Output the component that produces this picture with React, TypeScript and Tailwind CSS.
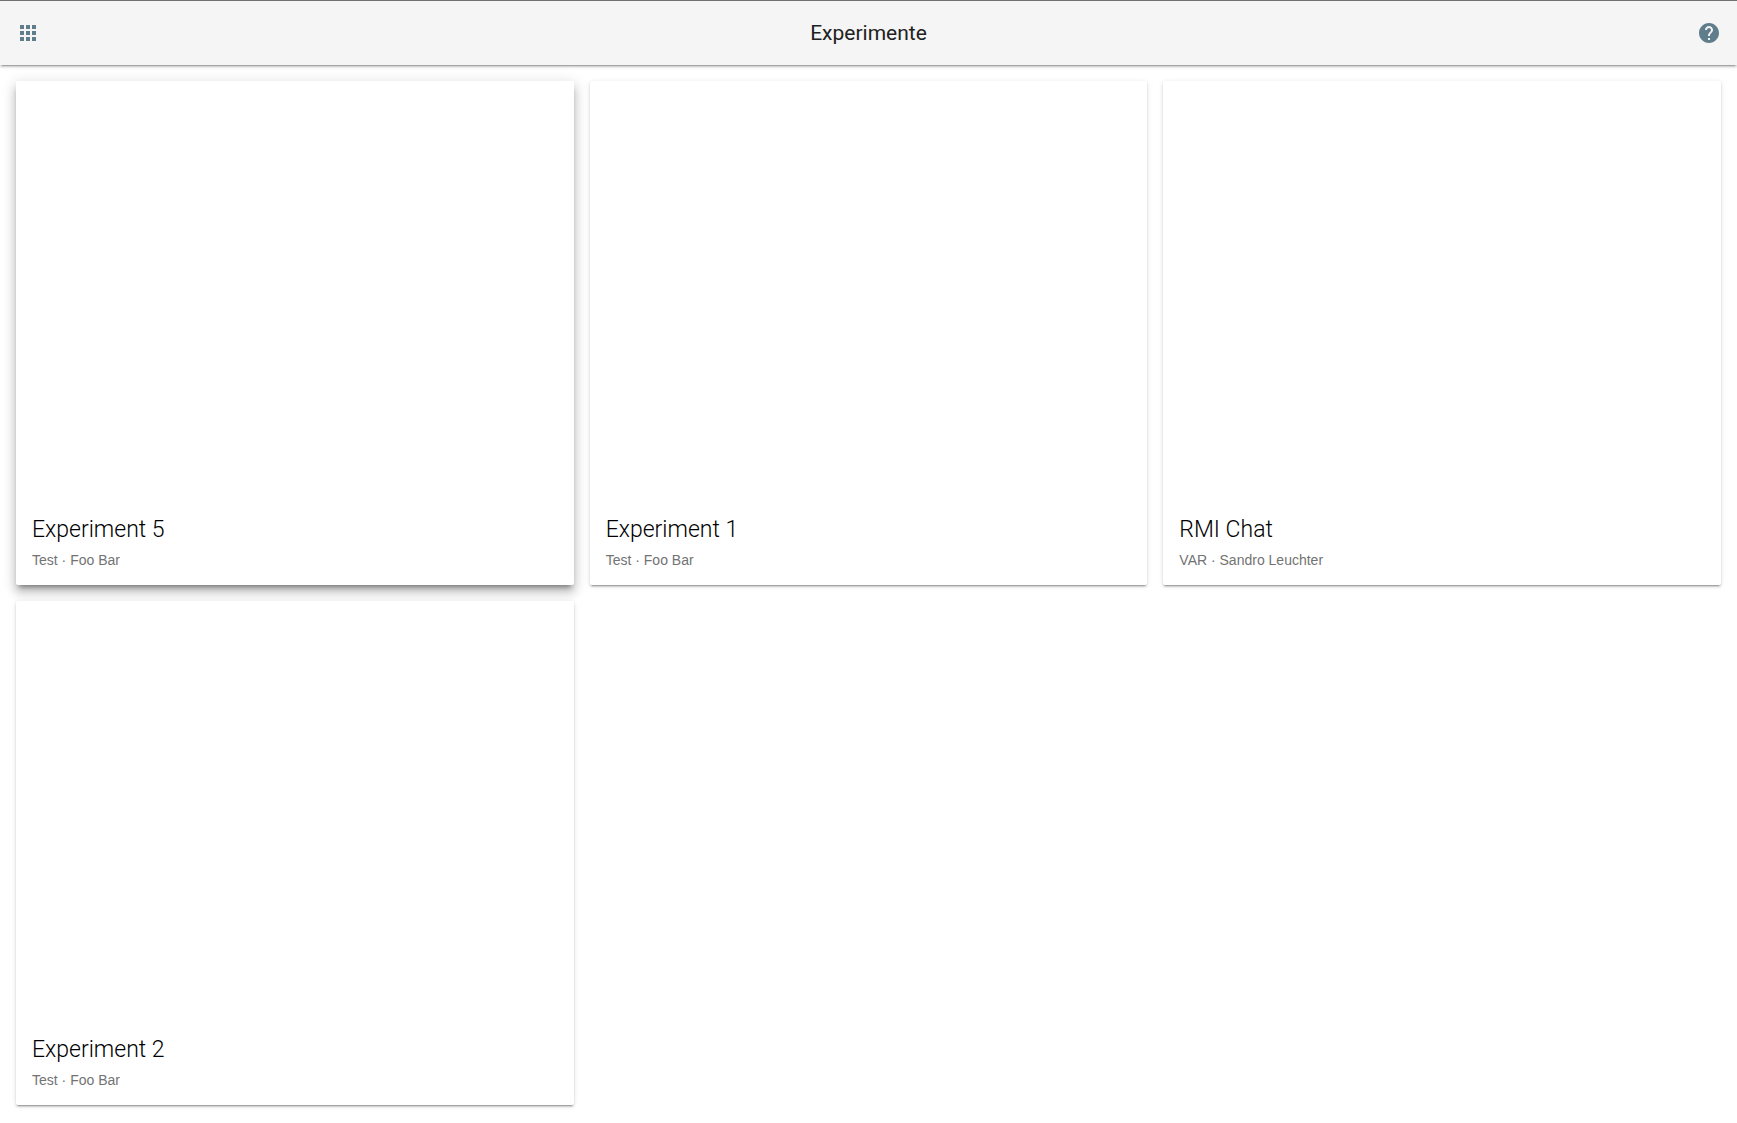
import React from "react";

type Experiment = { id: string; title: string; course: string; author: string; raised?: boolean };

const experiments: Experiment[] = [
  { id: "experiment-5", title: "Experiment 5", course: "Test", author: "Foo Bar", raised: true },
  { id: "experiment-1", title: "Experiment 1", course: "Test", author: "Foo Bar" },
  { id: "rmi-chat", title: "RMI Chat", course: "VAR", author: "Sandro Leuchter" },
  { id: "experiment-2", title: "Experiment 2", course: "Test", author: "Foo Bar" },
];

function AppsIcon() {
  return (
    <svg viewBox="0 0 24 24" className="size-6 fill-current" aria-hidden="true">
      <path d="M4 8h4V4H4v4zm6 12h4v-4h-4v4zm-6 0h4v-4H4v4zm0-6h4v-4H4v4zm6 0h4v-4h-4v4zm6-10v4h4V4h-4zm-6 4h4V4h-4v4zm6 6h4v-4h-4v4zm0 6h4v-4h-4v4z" />
    </svg>
  );
}

function HelpIcon() {
  return (
    <svg viewBox="0 0 24 24" className="size-6 fill-current" aria-hidden="true">
      <path d="M12 2C6.48 2 2 6.48 2 12s4.48 10 10 10 10-4.48 10-10S17.52 2 12 2zm1 17h-2v-2h2v2zm2.07-7.75l-.9.92C13.45 12.9 13 13.5 13 15h-2v-.5c0-1.1.45-2.1 1.17-2.83l1.24-1.26c.37-.36.59-.86.59-1.41 0-1.1-.9-2-2-2s-2 .9-2 2H8c0-2.21 1.79-4 4-4s4 1.79 4 4c0 .88-.36 1.68-.93 2.25z" />
    </svg>
  );
}

function ExperimentCard({ experiment }: { experiment: Experiment }) {
  const shadow = experiment.raised
    ? "shadow-[0_8px_10px_1px_rgba(0,0,0,0.14),0_3px_14px_2px_rgba(0,0,0,0.12),0_5px_5px_-3px_rgba(0,0,0,0.4)]"
    : "shadow-[0_2px_2px_rgba(0,0,0,0.14),0_1px_5px_rgba(0,0,0,0.12),0_3px_1px_-2px_rgba(0,0,0,0.2)]";
  return (
    <a href={`#${experiment.id}`} className={`block rounded-xs bg-white ${shadow}`}>
      <div className="h-104" />
      <div className="flex flex-col gap-1 px-4 pt-[17px] pb-[15px]">
        <h2 className="font-[Roboto,sans-serif] text-[23px] leading-8 font-light text-black">{experiment.title}</h2>
        <p className="text-sm text-[#737373]">
          {experiment.course} · {experiment.author}
        </p>
      </div>
    </a>
  );
}

export default function App() {
  return (
    <div className="min-h-screen bg-white font-['Liberation_Sans',Arial,sans-serif]">
      <header className="relative flex h-[65px] items-center justify-between border-t border-[#737073] bg-[#f5f5f5] px-4 text-[#607d8b] shadow-[0_2px_2px_rgba(0,0,0,0.14),0_1px_5px_rgba(0,0,0,0.12),0_3px_1px_-2px_rgba(0,0,0,0.2)]">
        <button type="button" aria-label="Apps">
          <AppsIcon />
        </button>
        <h1 className="font-[Roboto,sans-serif] text-[21px] leading-7 text-[#212121]">Experimente</h1>
        <button type="button" aria-label="Hilfe">
          <HelpIcon />
        </button>
      </header>
      <main className="grid grid-cols-3 gap-4 p-4">
        {experiments.map((experiment) => (
          <ExperimentCard key={experiment.id} experiment={experiment} />
        ))}
      </main>
    </div>
  );
}
